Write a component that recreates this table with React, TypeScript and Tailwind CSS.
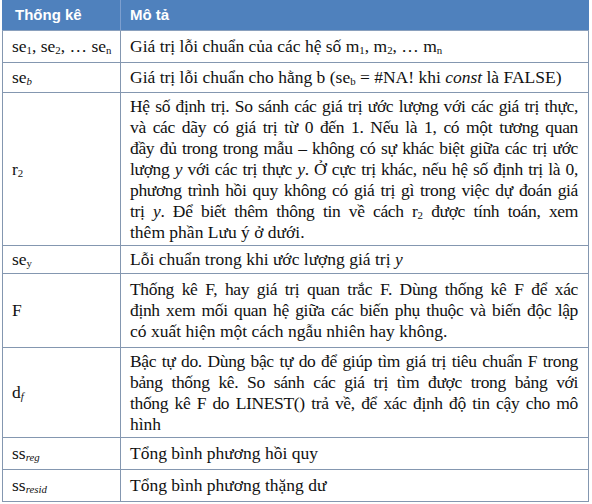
import React from "react";

function Lines({ lines }: { lines: React.ReactNode[] }) {
  return (
    <div className="w-full">
      {lines.map((l, i) => (
        <div
          key={i}
          className={
            i < lines.length - 1
              ? "whitespace-nowrap text-justify [text-align-last:justify] tracking-[-0.35px]"
              : "whitespace-nowrap text-left"
          }
        >
          {l}
        </div>
      ))}
    </div>
  );
}

const Sub = ({ children, it }: { children: React.ReactNode; it?: boolean }) => (
  <sub className={"text-[0.62em] relative bottom-[-0.2em] " + (it ? "italic" : "")}>{children}</sub>
);

type Row = { h: string; left: React.ReactNode; right: React.ReactNode };

export default function App() {
  const rows: Row[] = [
    {
      h: "h-[32px]",
      left: (
        <>
          se<Sub>1</Sub>, se<Sub>2</Sub>, … se<Sub>n</Sub>
        </>
      ),
      right: (
        <>
          Giá trị lỗi chuẩn của các hệ số m<Sub>1</Sub>, m<Sub>2</Sub>, … m<Sub>n</Sub>
        </>
      ),
    },
    {
      h: "h-[30px]",
      left: (
        <>
          se<Sub it>b</Sub>
        </>
      ),
      right: (
        <>
          Giá trị lỗi chuẩn cho hằng b (se<Sub>b</Sub> = #NA! khi <i>const</i> là FALSE)
        </>
      ),
    },
    {
      h: "h-[153px]",
      left: (
        <>
          r<Sub>2</Sub>
        </>
      ),
      right: (
        <Lines
          lines={[
            "Hệ số định trị. So sánh các giá trị ước lượng với các giá trị thực,",
            "và các dãy có giá trị từ 0 đến 1. Nếu là 1, có một tương quan",
            "đầy đủ trong trong mẫu – không có sự khác biệt giữa các trị ước",
            <>
              lượng <i>y</i> với các trị thực <i>y</i>. Ở cực trị khác, nếu hệ số định trị là 0,
            </>,
            "phương trình hồi quy không có giá trị gì trong việc dự đoán giá",
            <>
              trị <i>y</i>. Để biết thêm thông tin về cách r<Sub>2</Sub> được tính toán, xem
            </>,
            "thêm phần Lưu ý ở dưới.",
          ]}
        />
      ),
    },
    {
      h: "h-[28px]",
      left: (
        <>
          se<Sub>y</Sub>
        </>
      ),
      right: (
        <>
          Lỗi chuẩn trong khi ước lượng giá trị <i>y</i>
        </>
      ),
    },
    {
      h: "h-[74px]",
      left: <>F</>,
      right: (
        <Lines
          lines={[
            "Thống kê F, hay giá trị quan trắc F. Dùng thống kê F để xác",
            "định xem mối quan hệ giữa các biến phụ thuộc và biến độc lập",
            "có xuất hiện một cách ngẫu nhiên hay không.",
          ]}
        />
      ),
    },
    {
      h: "h-[90px]",
      left: (
        <>
          d<Sub it>f</Sub>
        </>
      ),
      right: (
        <Lines
          lines={[
            "Bậc tự do. Dùng bậc tự do để giúp tìm giá trị tiêu chuẩn F trong",
            "bảng thống kê. So sánh các giá trị tìm được trong bảng với",
            "thống kê F do LINEST() trả về, để xác định độ tin cậy cho mô",
            "hình",
          ]}
        />
      ),
    },
    {
      h: "h-[32px]",
      left: (
        <>
          ss<Sub it>reg</Sub>
        </>
      ),
      right: <>Tổng bình phương hồi quy</>,
    },
    {
      h: "h-[32px]",
      left: (
        <>
          ss<Sub it>resid</Sub>
        </>
      ),
      right: <>Tổng bình phương thặng dư</>,
    },
  ];

  return (
    <div className="w-[592px] h-[504px] bg-white">
      <div className="ml-[2px] w-[587px]">
        <div className="flex h-[31px] bg-[#4f81bd] text-white font-bold text-[15px] font-['Liberation_Sans',Arial,sans-serif] border-b border-[#8aa0bd]">
          <div className="w-[119px] pl-[13px] flex items-center border-r border-[#7d9fcf]">Thống kê</div>
          <div className="flex-1 pl-[9px] flex items-center">Mô tả</div>
        </div>
        <div className="border-l border-r border-[#8497b0] font-['Liberation_Serif','Times_New_Roman',serif] text-[17.5px] leading-[21px] text-[#111]">
          {rows.map((r, i) => (
            <div key={i} className={"flex border-b border-[#8497b0] " + r.h}>
              <div className="w-[118px] shrink-0 pl-[9px] flex items-center border-r border-[#8497b0] whitespace-nowrap">
                <div>{r.left}</div>
              </div>
              <div className="flex-1 min-w-0 pl-[9px] pr-[10px] flex items-center whitespace-nowrap">
                <div className="w-full">{r.right}</div>
              </div>
            </div>
          ))}
        </div>
      </div>
    </div>
  );
}
